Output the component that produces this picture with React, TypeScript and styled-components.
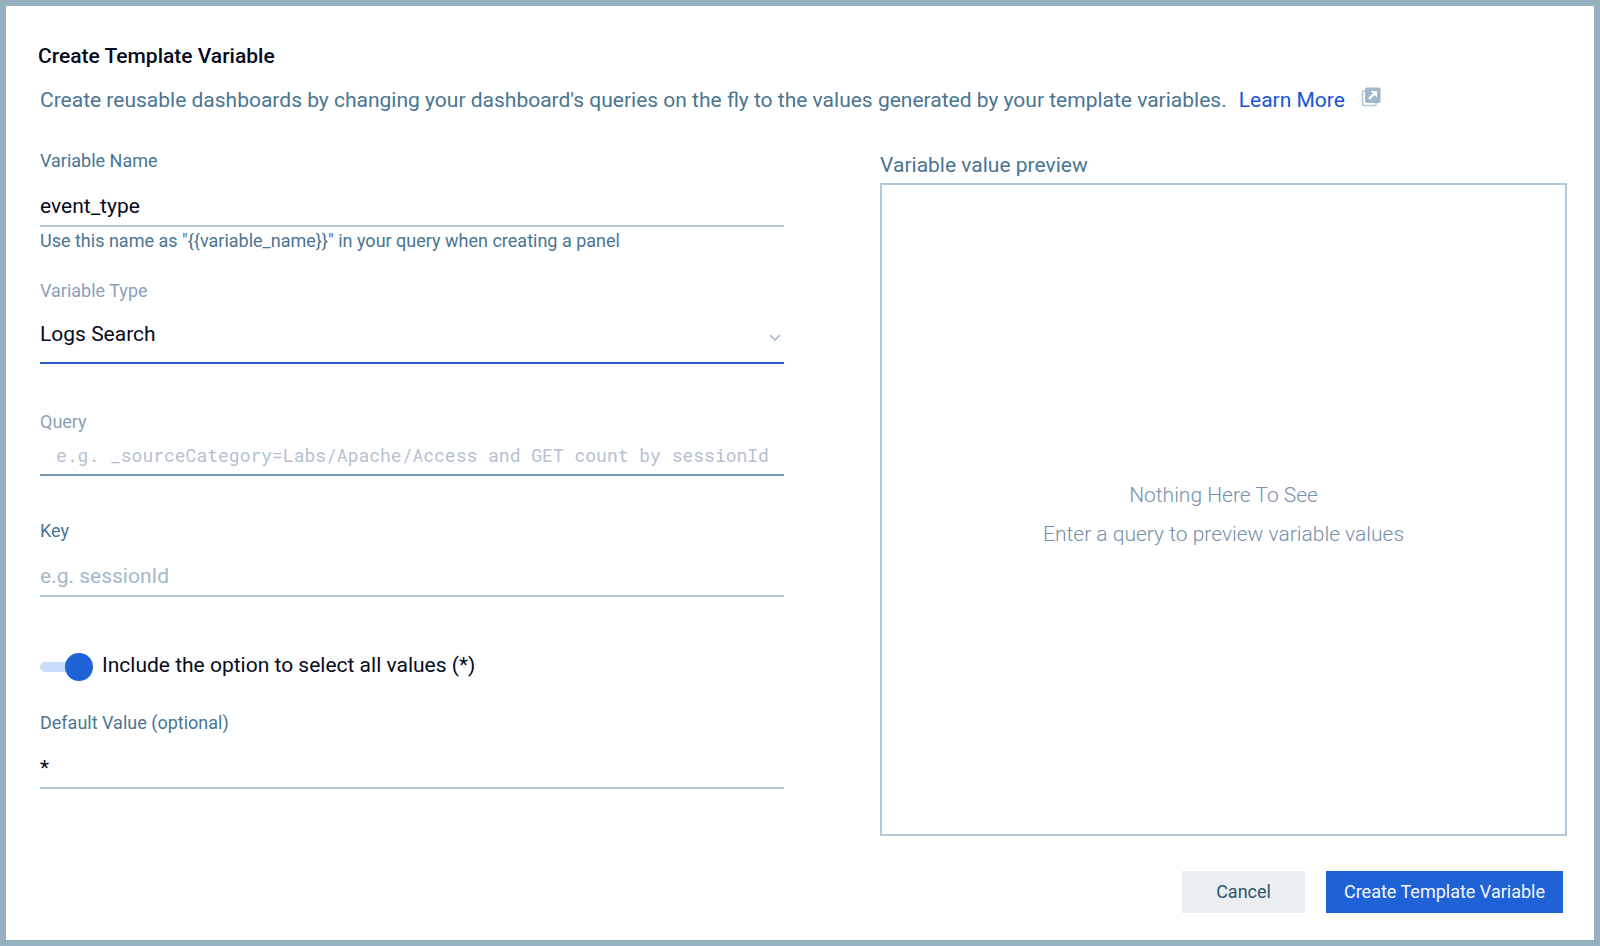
import React, { useState } from 'react';
import styled, { createGlobalStyle, css } from 'styled-components';

const colors = {
  frame: '#95b1bf',
  ink: '#060b1c',
  slate: '#4a7592',
  muted: '#8aa1b8',
  placeholder: '#a3b8cc',
  line: '#b4c7d7',
  blue: '#1f62d6',
  track: '#c8dcfd',
};

const GlobalStyle = createGlobalStyle`
  *, *::before, *::after { box-sizing: border-box; }
  body { margin: 0; background: #fff; }
  body, input, select, button { font-family: Roboto, "Liberation Sans", sans-serif; }
`;

const Dialog = styled.main`
  display: flex;
  flex-direction: column;
  min-height: 100vh;
  padding: 36px 27px 27px 32px;
  border: 6px solid ${colors.frame};
  color: ${colors.ink};
  font-size: 21px;
  line-height: 28px;
`;

const Title = styled.h1`
  margin: 0 0 16px;
  font-size: 21px;
  font-weight: 500;
`;

const Description = styled.p`
  display: flex;
  align-items: flex-start;
  gap: 12px;
  margin: 0 0 35px;
  padding-left: 2px;
  color: ${colors.slate};
`;

const LearnMore = styled.a`
  display: inline-flex;
  flex: none;
  gap: 16px;
  color: #1453d8;
  text-decoration: none;
`;

const LinkIcon = styled.svg`
  margin-top: 1px;
`;

const Columns = styled.div`
  display: grid;
  flex: 1;
  grid-template-columns: 13fr 12fr;
  gap: 96px;
  padding-left: 2px;
`;

const Form = styled.form`
  display: flex;
  flex-direction: column;
  min-width: 0;
`;

const Field = styled.div<{ $gap: number }>`
  display: flex;
  flex-direction: column;
  margin-bottom: ${(p) => p.$gap}px;
`;

const Label = styled.label<{ $muted?: boolean }>`
  color: ${(p) => (p.$muted ? colors.muted : colors.slate)};
  font-size: 18px;
  line-height: 24px;
`;

const Hint = styled.small`
  margin-top: 2px;
  color: ${colors.slate};
  font-size: 18px;
  line-height: 24px;
`;

const control = css`
  width: 100%;
  border: 0;
  border-radius: 0;
  outline: 0;
  background: transparent;
  color: ${colors.ink};
  font-size: 21px;
  line-height: 28px;
`;

const TextInput = styled.input`
  ${control}
  height: 54px;
  padding: 19px 0 5px;
  border-bottom: 2px solid ${colors.line};

  &::placeholder {
    color: ${colors.placeholder};
    opacity: 1;
  }
`;

const QueryInput = styled.input`
  ${control}
  height: 42px;
  padding: 9px 0 7px 16px;
  border-bottom: 2px solid #7c98b0;
  font-family: "Roboto Mono", "Liberation Mono", monospace;
  font-size: 18px;
  line-height: 24px;

  &::placeholder {
    color: #b3c1d1;
    opacity: 1;
  }
`;

const SelectWrap = styled.div`
  position: relative;
`;

const Select = styled.select`
  ${control}
  display: block;
  height: 61px;
  padding: 17px 24px 14px 0;
  border-bottom: 2px solid #2a5bd0;
  appearance: none;
`;

const Chevron = styled.svg`
  position: absolute;
  top: 30px;
  right: 2px;
  pointer-events: none;
`;

const ToggleRow = styled.label`
  display: flex;
  gap: 8px;
  height: 28px;
  margin-bottom: 32px;
`;

const Toggle = styled.input`
  display: flex;
  flex: none;
  align-items: center;
  width: 54px;
  height: 28px;
  margin: 2px 0 0;
  appearance: none;

  &::before {
    content: '';
    width: 40px;
    height: 10px;
    border-radius: 5px;
    background: ${colors.track};
  }

  &::after {
    content: '';
    width: 28px;
    height: 28px;
    margin-left: -40px;
    border-radius: 50%;
    background: ${colors.muted};
  }

  &:checked::after {
    margin-left: -15px;
    background: ${colors.blue};
  }
`;

const Preview = styled.section`
  display: flex;
  flex-direction: column;
  padding-top: 2px;
`;

const PreviewTitle = styled.h2`
  margin: 0 0 4px;
  color: ${colors.slate};
  font-size: 21px;
  font-weight: 400;
`;

const PreviewBox = styled.div`
  display: flex;
  flex: 1;
  flex-direction: column;
  align-items: center;
  justify-content: center;
  padding-top: 11px;
  border: 2px solid ${colors.line};
`;

const EmptyText = styled.p`
  margin: 0;
  color: #7490ad;
  font-weight: 300;
  line-height: 39px;
`;

const Actions = styled.footer`
  display: flex;
  justify-content: flex-end;
  gap: 21px;
  margin-top: 35px;
  padding-right: 4px;
`;

const Button = styled.button<{ $primary?: boolean }>`
  height: 42px;
  padding: 0 ${(p) => (p.$primary ? 18 : 34)}px;
  border: 0;
  background: ${(p) => (p.$primary ? colors.blue : '#eaeef1')};
  color: ${(p) => (p.$primary ? '#f4f7fe' : '#2f556d')};
  font-size: 18px;
  line-height: 24px;
`;

const ExternalIcon = () => (
  <LinkIcon width="20" height="20" viewBox="0 0 20 20" aria-hidden="true">
    <path
      d="M4 4H2.8A1.3 1.3 0 0 0 1.500 5.300V16.700A1.800 1.800 0 0 0 3.300 18.500H13.700A1.300 1.300 0 0 0 15 17.200V16"
      fill="none"
      stroke="#b3c5d5"
      strokeWidth="1.600"
    />
    <rect x="4" y="0.500" width="15.500" height="15.500" rx="1.800" fill="#a0b6ca" />
    <path d="M8 12L14 6" stroke="#fff" strokeWidth="2.400" />
    <path d="M9.500 4H16V10.500Z" fill="#fff" />
  </LinkIcon>
);

export default function App() {
  const [name, setName] = useState('event_type');
  const [query, setQuery] = useState('');
  const [key, setKey] = useState('');
  const [includeAll, setIncludeAll] = useState(true);
  const [fallback, setFallback] = useState('*');

  return (
    <>
      <GlobalStyle />
      <Dialog>
        <Title>Create Template Variable</Title>
        <Description>
          Create reusable dashboards by changing your dashboard's queries on the fly to the values
          generated by your template variables.
          <LearnMore href="#learn-more">
            Learn More
            <ExternalIcon />
          </LearnMore>
        </Description>
        <Columns>
          <Form id="variable-form" onSubmit={(e) => e.preventDefault()}>
            <Field $gap={26}>
              <Label htmlFor="name">Variable Name</Label>
              <TextInput id="name" value={name} onChange={(e) => setName(e.target.value)} />
              <Hint>{'Use this name as "{{variable_name}}" in your query when creating a panel'}</Hint>
            </Field>
            <Field $gap={46}>
              <Label htmlFor="type" $muted>
                Variable Type
              </Label>
              <SelectWrap>
                <Select id="type" defaultValue="logs">
                  <option value="logs">Logs Search</option>
                </Select>
                <Chevron width="14" height="10" viewBox="0 0 14 10" aria-hidden="true">
                  <path d="M2 2L7 7L12 2" fill="none" stroke="#a3b7c8" strokeWidth="1.500" />
                </Chevron>
              </SelectWrap>
            </Field>
            <Field $gap={43}>
              <Label htmlFor="query" $muted>
                Query
              </Label>
              <QueryInput
                id="query"
                placeholder="e.g. _sourceCategory=Labs/Apache/Access and GET count by sessionId"
                value={query}
                onChange={(e) => setQuery(e.target.value)}
              />
            </Field>
            <Field $gap={54}>
              <Label htmlFor="key">Key</Label>
              <TextInput
                id="key"
                placeholder="e.g. sessionId"
                value={key}
                onChange={(e) => setKey(e.target.value)}
              />
            </Field>
            <ToggleRow>
              <Toggle
                type="checkbox"
                role="switch"
                checked={includeAll}
                onChange={(e) => setIncludeAll(e.target.checked)}
              />
              Include the option to select all values (*)
            </ToggleRow>
            <Field $gap={0}>
              <Label htmlFor="default">Default Value (optional)</Label>
              <TextInput id="default" value={fallback} onChange={(e) => setFallback(e.target.value)} />
            </Field>
          </Form>
          <Preview>
            <PreviewTitle>Variable value preview</PreviewTitle>
            <PreviewBox>
              <EmptyText>Nothing Here To See</EmptyText>
              <EmptyText>Enter a query to preview variable values</EmptyText>
            </PreviewBox>
          </Preview>
        </Columns>
        <Actions>
          <Button type="button">Cancel</Button>
          <Button type="submit" form="variable-form" $primary>
            Create Template Variable
          </Button>
        </Actions>
      </Dialog>
    </>
  );
}
